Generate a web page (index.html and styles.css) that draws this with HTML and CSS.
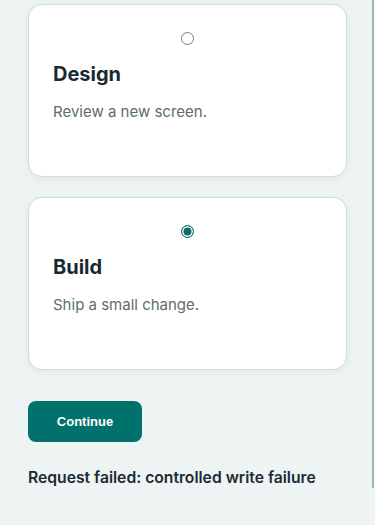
FILE: index.html
```html
<!DOCTYPE html>
<html lang="en">
<head>
  <meta charset="UTF-8">
  <meta name="viewport" content="width=device-width, initial-scale=1.0">
  <title>Choose a task</title>
  <link rel="stylesheet" href="styles.css">
</head>
<body>
  <div class="page">
    <form class="choices" id="taskForm">
      <label class="card">
        <input type="radio" name="task" value="design">
        <span class="card-title">Design</span>
        <span class="card-text">Review a new screen.</span>
      </label>

      <label class="card">
        <input type="radio" name="task" value="build" checked>
        <span class="card-title">Build</span>
        <span class="card-text">Ship a small change.</span>
      </label>

      <button type="submit" class="continue">Continue</button>
    </form>
    <p class="error">Request failed: controlled write failure</p>
  </div>
  <div class="scroll-thumb"></div>
</body>
</html>
```

FILE: styles.css
```css
body {
  font-family: Inter, "Noto Sans", sans-serif;
  margin: 0;
  background-color: #edf4f3;
  color: #172a33;
}

.page {
  padding: 4px 28px 0 28px;
}

.choices {
  display: flex;
  flex-direction: column;
  align-items: flex-start;
  gap: 20px;
}

.card {
  box-sizing: border-box;
  width: 319px;
  height: 173px;
  background: white;
  border: 1px solid #cfdcda;
  border-radius: 14px;
  box-shadow: 0 2px 8px rgba(20, 60, 60, 0.06);
  padding: 27px 24px 0 24px;
  display: flex;
  flex-direction: column;
  cursor: pointer;
}

.card input {
  appearance: none;
  -webkit-appearance: none;
  box-sizing: border-box;
  width: 13px;
  height: 13px;
  margin: 0 auto;
  border: 1px solid #7a7a7a;
  border-radius: 50%;
  background: white;
}

.card input:checked {
  border: 1.5px solid #0b6e6a;
  background: #0b6e6a;
  box-shadow: inset 0 0 0 1.5px white;
}

.card-title {
  font-size: 20px;
  font-weight: 700;
  line-height: 24px;
  margin-top: 17px;
  color: #172a33;
}

.card-text {
  font-size: 15px;
  line-height: 22px;
  margin-top: 15px;
  color: #5d6c70;
}

.continue {
  margin-top: 11px;
  width: 114px;
  height: 41px;
  background: #00716c;
  color: white;
  border: none;
  border-radius: 8px;
  font-family: "Liberation Sans", Arial, sans-serif;
  font-size: 13px;
  font-weight: 700;
  cursor: pointer;
}

.error {
  margin: 25px 0 0 0;
  font-size: 15.7px;
  font-weight: 600;
  line-height: 22px;
  color: #1c2b33;
}

.scroll-thumb {
  position: fixed;
  top: 0;
  right: 1px;
  width: 2px;
  height: 488px;
  background: #aab2b2;
}
```
